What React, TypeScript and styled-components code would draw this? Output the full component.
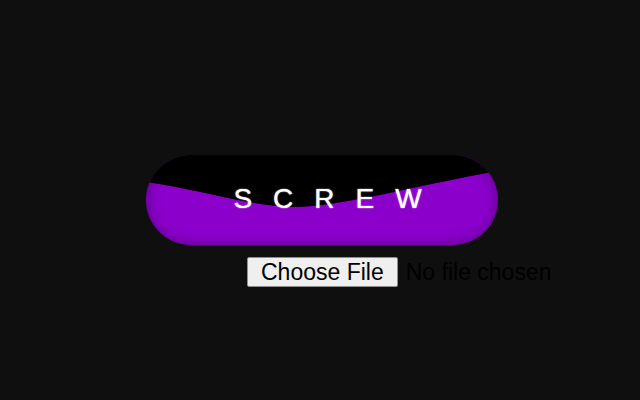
import React from "react";
import styled, { createGlobalStyle } from "styled-components";

const GlobalStyle = createGlobalStyle`
  html, body {
    margin: 0;
    padding: 0;
    background: #0f0f0f;
    font-family: "Liberation Sans", Arial, sans-serif;
  }
`;

const Stage = styled.main`
  min-height: 100vh;
  box-sizing: border-box;
  padding: 155px 0 0 146px;
  display: flex;
  flex-direction: column;
  align-items: flex-start;
  gap: 12px;
`;

const PillButton = styled.button`
  position: relative;
  width: 352px;
  height: 90px;
  box-sizing: border-box;
  padding: 0 0 3px 32px;
  border: none;
  border-radius: 45px;
  overflow: hidden;
  background: #8b00cb;
  display: flex;
  align-items: center;
  justify-content: center;
  cursor: pointer;

  /* dark wave across the upper half */
  &::before {
    content: "";
    position: absolute;
    inset: 0;
    background: #000;
    clip-path: path("M0 0 H352 V16 C262 32 190 53 146 52 C104 51 60 36 0 27 Z");
  }

  /* soft shading around the rim */
  &::after {
    content: "";
    position: absolute;
    inset: 0;
    border-radius: inherit;
    box-shadow: inset 0 0 14px rgba(0, 0, 0, 0.35);
    pointer-events: none;
  }
`;

const Label = styled.span`
  position: relative;
  z-index: 1;
  color: #fff;
  font-family: "Liberation Sans", Arial, sans-serif;
  font-size: 28px;
  letter-spacing: 21px;
  line-height: normal;
  text-shadow: 0 0 1px rgba(255, 255, 255, 0.8), 0 0 2px rgba(255, 255, 255, 0.4);
`;

const FileRow = styled.div`
  padding-left: 101px;
`;

const FileInput = styled.input`
  width: 320px;
  font-family: "Liberation Sans", Arial, sans-serif;
  font-size: 23px;
  color: #000;

  &::file-selector-button {
    font-family: "Liberation Sans", Arial, sans-serif;
    font-size: 23px;
    color: #000;
    background: #efefef;
    border: 1px solid #8f8f8f;
    border-radius: 2px;
    padding: 1px 13px;
    margin-right: 8px;
    height: 30px;
  }
`;

export default function App() {
  return (
    <>
      <GlobalStyle />
      <Stage>
        <PillButton type="button">
          <Label>SCREW</Label>
        </PillButton>
        <FileRow>
          <FileInput type="file" />
        </FileRow>
      </Stage>
    </>
  );
}
